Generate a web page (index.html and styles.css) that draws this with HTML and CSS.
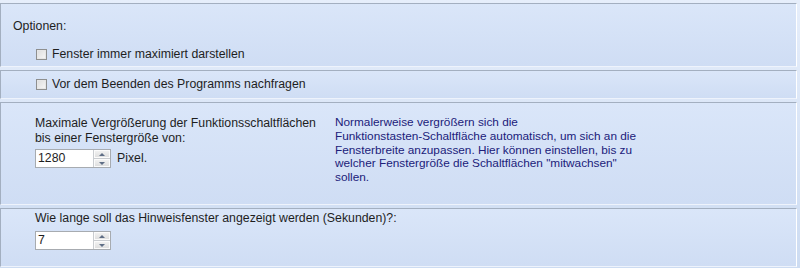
FILE: index.html
```html
<!DOCTYPE html>
<html>
<head>
<meta charset="utf-8">
<link rel="stylesheet" href="styles.css">
</head>
<body>
<div class="page">
  <div class="panel p1">
    <div class="heading">Optionen:</div>
    <label class="check-row"><span class="checkbox"></span><span>Fenster immer maximiert darstellen</span></label>
  </div>
  <div class="panel p2">
    <label class="check-row"><span class="checkbox"></span><span>Vor dem Beenden des Programms nachfragen</span></label>
  </div>
  <div class="panel p3">
    <div class="left-col">
      <div class="label">Maximale Vergrößerung der Funktionsschaltflächen<br>bis einer Fenstergröße von:</div>
      <div class="spin-row">
        <div class="spin"><span class="spin-value">1280</span><span class="spin-btns"><span class="btn up"><span class="tri-up"></span></span><span class="btn down"><span class="tri-down"></span></span></span></div>
        <span class="unit">Pixel.</span>
      </div>
    </div>
    <div class="desc">Normalerweise vergrößern sich die<br>Funktionstasten-Schaltfläche automatisch, um sich an die<br>Fensterbreite anzupassen. Hier können einstellen, bis zu<br>welcher Fenstergröße die Schaltflächen "mitwachsen"<br>sollen.</div>
  </div>
  <div class="panel p4">
    <div class="label">Wie lange soll das Hinweisfenster angezeigt werden (Sekunden)?:</div>
    <div class="spin-row">
      <div class="spin"><span class="spin-value">7</span><span class="spin-btns"><span class="btn up"><span class="tri-up"></span></span><span class="btn down"><span class="tri-down"></span></span></span></div>
    </div>
  </div>
</div>
</body>
</html>
```
FILE: styles.css
```css
html, body {
  margin: 0;
  padding: 0;
}
body {
  width: 800px;
  height: 268px;
  overflow: hidden;
  background: linear-gradient(#e6eefb, #cddcf2);
  font-family: "Liberation Sans", Arial, sans-serif;
  font-size: 12.3px;
  color: #1e1e1e;
}
.page {
  padding-top: 3px;
  width: 797px;
  display: flex;
  flex-direction: column;
  gap: 3px;
}
.panel {
  box-sizing: border-box;
  border-top: 1px solid #a3afc0;
  border-left: 1px solid #a3afc0;
  border-right: 1px solid #ffffff;
  border-bottom: 1px solid #eef3fc;
  background: linear-gradient(#dae6f9, #cfddf4);
}
.p1 {
  height: 64px;
  padding: 15px 0 0 12px;
}
.heading {
  line-height: 15px;
}
.check-row {
  display: flex;
  align-items: center;
  gap: 5px;
  line-height: 15px;
}
.p1 .check-row {
  margin: 13px 0 0 23px;
}
.p2 {
  height: 29px;
  padding: 6px 0 0 35px;
}
.checkbox {
  width: 11px;
  height: 11px;
  box-sizing: border-box;
  border: 1px solid #8e8f8f;
  background: linear-gradient(135deg, #dcdcdc, #f8f8f8);
  box-shadow: inset 0 0 0 1px #e6e6e6;
}
.p3 {
  height: 103px;
  display: flex;
  padding-top: 13px;
}
.left-col {
  width: 298px;
  padding-left: 34px;
}
.label {
  line-height: 15px;
}
.spin-row {
  display: flex;
  align-items: center;
  gap: 6px;
  margin-top: 3px;
}
.spin {
  width: 76px;
  height: 19px;
  box-sizing: border-box;
  border: 1px solid #a7abb0;
  background: #fff;
  display: flex;
  justify-content: space-between;
}
.spin-value {
  padding-left: 2px;
  line-height: 17px;
}
.spin-btns {
  width: 16px;
  display: flex;
  flex-direction: column;
  border-left: 1px solid #c9ccd0;
}
.btn {
  flex: 1;
  display: flex;
  align-items: center;
  justify-content: center;
  background: linear-gradient(#f4f4f4, #dcdcdc);
  box-shadow: inset 0 0 0 1px #fbfbfb;
}
.btn.down {
  border-top: 1px solid #c9ccd0;
}
.tri-up {
  width: 0;
  height: 0;
  border-left: 3px solid transparent;
  border-right: 3px solid transparent;
  border-bottom: 3px solid #5f6e86;
}
.tri-down {
  width: 0;
  height: 0;
  border-left: 3px solid transparent;
  border-right: 3px solid transparent;
  border-top: 3px solid #5f6e86;
}
.unit {
  line-height: 15px;
}
.desc {
  padding-left: 2px;
  font-size: 11.8px;
  line-height: 13.75px;
  color: #20207a;
  padding-top: 0;
}
.p4 {
  height: 59px;
  padding: 2px 0 0 34px;
}
.p4 .spin-row {
  margin-top: 5px;
}
```
